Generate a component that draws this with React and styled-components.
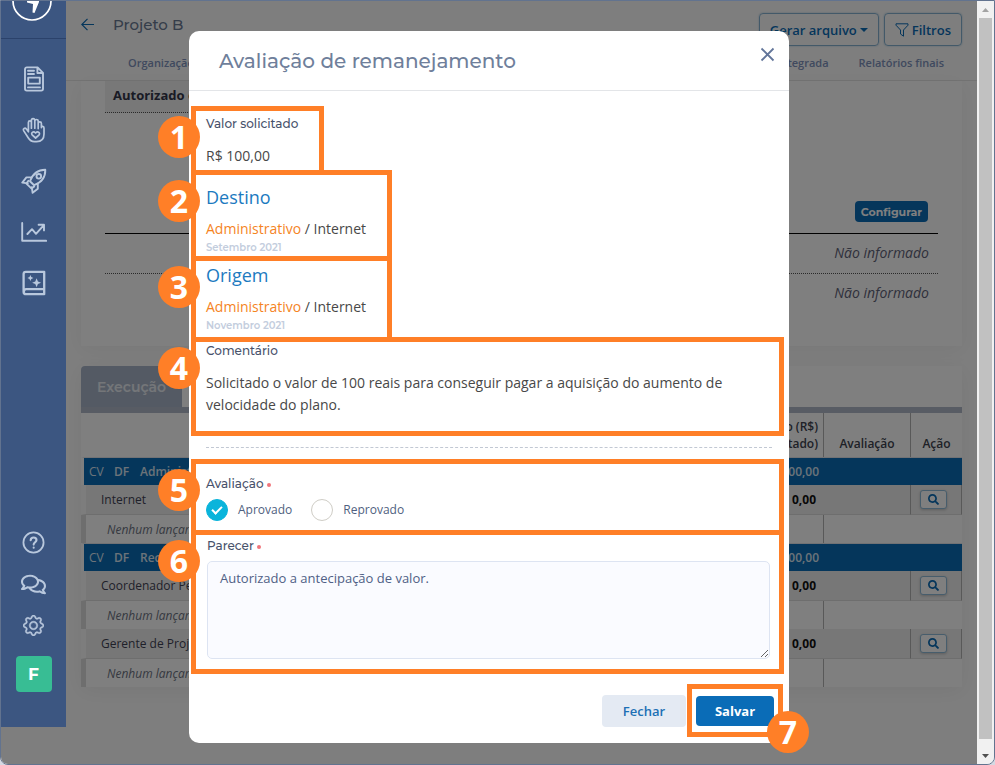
import React from "react"
import styled, { createGlobalStyle, css } from "styled-components"
import { FaRegComments, FaSearch } from "react-icons/fa"
import { BsGear } from "react-icons/bs"

const ORANGE = "#ff7f27"
const BLUE = "#0a6cb7"
const BODY_FONT = `"Open Sans", "Noto Sans", sans-serif`
const HEAD_FONT = `Montserrat, Inter, "Open Sans", sans-serif`

const GlobalStyle = createGlobalStyle`
  *, *::before, *::after {
    box-sizing: border-box;
  }

  body {
    margin: 0;
    background: #d5d9e2;
    font-family: ${BODY_FONT};
    font-size: 13px;
    color: #3f4254;
  }

  button, input, textarea {
    font-family: inherit;
  }

  h1, h2, h3, p {
    margin: 0;
  }
`

const Window = styled.div`
  display: flex;
  height: 100vh;
  border: 1px solid #62738f;
  border-radius: 0 0 8px 8px;
  overflow: hidden;
`

const Viewport = styled.div`
  position: relative;
  flex: 1;
  min-width: 0;
  display: flex;
  align-items: flex-start;
  background: #fdfdfd;
  overflow: hidden;
`

/* sidebar */

const Sidebar = styled.nav`
  position: relative;
  z-index: 2;
  flex: none;
  width: 65px;
  display: flex;
  flex-direction: column;
  align-items: center;
  padding-bottom: 35px;
  background: #3c5681;
  color: #b9c8dd;
`

const SidebarLogo = styled.a`
  width: 100%;
  height: 38px;
  display: flex;
  justify-content: center;
  padding-right: 3px;
  border-bottom: 1px solid #2b426b;
`

const SidebarGroup = styled.div`
  display: flex;
  flex-direction: column;
  align-items: center;
  gap: ${({ $gap }) => $gap};
  padding-top: ${({ $top }) => $top};
`

const SidebarLink = styled.a`
  display: flex;
  color: inherit;
`

const Avatar = styled.button`
  width: 36px;
  height: 36px;
  margin-top: 20px;
  border: 0;
  border-radius: 4px;
  background: #38bd94;
  color: white;
  font-family: ${HEAD_FONT};
  font-size: 17px;
  font-weight: 700;
  padding: 0;
`

/* page behind the dialog */

const Page = styled.main`
  flex: 1;
  min-width: 0;
`

const PageHeader = styled.header`
  height: 80px;
  padding: 12px 15px 0;
  border-bottom: 1px solid #e6e6e6;
`

const TitleBar = styled.div`
  display: flex;
  align-items: center;
  height: 33px;
`

const BackLink = styled.a`
  display: flex;
  width: 32px;
  margin-bottom: 10px;
  color: ${BLUE};
`

const PageTitle = styled.h1`
  flex: 1;
  margin-bottom: 10px;
  font-family: ${HEAD_FONT};
  font-size: 15px;
  font-weight: 500;
  color: #6b7a94;
`

const HeaderButton = styled.button`
  display: flex;
  align-items: center;
  justify-content: center;
  gap: 3px;
  height: 33px;
  padding: 0 10px;
  margin-left: 5px;
  border: 1px solid #86b3d3;
  border-radius: 4px;
  background: transparent;
  box-shadow: 0 0 2px #a9c8dc;
  color: ${BLUE};
  font-size: 13px;
  font-weight: 600;
`

const Caret = styled.span`
  border: 4px solid transparent;
  border-top-color: currentColor;
  border-bottom: 0;
`

const PageTabs = styled.div`
  display: flex;
  gap: 30px;
  padding: 8px 18px 0 47px;
  line-height: 18px;

  > a {
    color: #8093bd;
    font-size: 11px;
    font-weight: 600;
    text-decoration: none;
    white-space: nowrap;
  }

  > a:first-child {
    margin-right: auto;
  }
`

const Summary = styled.section`
  margin: 0 15px;
  height: 265px;
  padding: 0 24px;
  background: white;
  box-shadow: 0 4px 20px rgba(0, 0, 0, 0.05);
`

const SummaryTitle = styled.div`
  width: 50%;
  height: 32px;
  padding-left: 8px;
  background: #f0f0f0;
  border-bottom: 1px dotted #555;
  font-weight: 700;
  line-height: 28px;
  color: #33364a;
`

const ConfigRow = styled.div`
  display: flex;
  justify-content: flex-end;
  padding: 88px 10px 11px 0;
  border-bottom: 1px solid black;
`

const ConfigButton = styled.button`
  height: 21px;
  padding: 0 6px;
  border: 0;
  border-radius: 4px;
  background: ${BLUE};
  color: white;
  font-family: ${HEAD_FONT};
  font-size: 11px;
  font-weight: 700;
`

const EmptyValue = styled.p`
  height: 39px;
  padding-right: 9px;
  font-size: 14px;
  font-style: italic;
  line-height: 38px;
  text-align: right;
  color: #5f6278;

  & + & {
    border-top: 1px dotted #555;
  }
`

const Execution = styled.section`
  margin: 20px 15px 0;
  background: white;
  box-shadow: 0 4px 20px rgba(0, 0, 0, 0.06);
`

const ExecutionTabs = styled.div`
  display: flex;
  border-bottom: 6px solid #b1b9c9;
`

const ExecutionTab = styled.button`
  height: 41px;
  padding: 0 16px;
  border: 0;
  border-radius: 4px 0 0 0;
  background: #a9b5c8;
  color: #e9edf3;
  font-family: ${HEAD_FONT};
  font-size: 14px;
  font-weight: 600;
`

const Table = styled.table`
  width: 100%;
  table-layout: fixed;
  border-spacing: 0;
  font-size: 12px;

  td,
  th {
    padding: 0 5px;
    text-align: left;
    white-space: nowrap;
    overflow: hidden;
  }

  th {
    height: 44px;
    padding-top: 4px;
    font-weight: 600;
    line-height: 17px;
    vertical-align: bottom;
    padding-bottom: 5px;
    color: #40434f;
  }

  th + th {
    border-right: 1px solid #b3b3b3;
    text-align: right;
  }

  th + th + th {
    text-align: center;
  }

  th:last-child {
    border-right: 0;
  }
`

const GroupRow = styled.tr`
  height: 28px;

  > td {
    background: ${BLUE};
    color: #d9e7f3;
    font-weight: 600;
    border-top: 1px solid #e2e4ea;
  }

  > td:first-child {
    border-left: 3px solid white;
    font-weight: 400;
  }

  > td:nth-child(4) {
    text-align: right;
  }
`

const ItemRow = styled.tr`
  height: 30px;

  > td {
    background: #efefef;
    border-bottom: 1px solid #dcdcdc;
  }

  > td:first-child {
    padding-left: 15px;
    border-left: 5px solid #fafafa;
  }

  > td:nth-child(2) {
    padding-right: 8px;
    text-align: right;
    font-weight: 700;
    color: #111;
  }

  > td:nth-child(n + 3) {
    border-right: 1px solid #b3b3b3;
  }

  > td:last-child {
    padding: 0 0 0 9px;
  }
`

const EmptyRow = styled.tr`
  height: 28px;

  > td:first-child {
    padding-left: 21px;
    border-left: 5px solid #dcdcdc;
    border-right: 1px solid #b3b3b3;
    font-style: italic;
    color: #6d7382;
  }
`

const SearchButton = styled.button`
  display: inline-flex;
  align-items: center;
  justify-content: center;
  width: 27px;
  height: 19px;
  padding: 0;
  border: 1px solid #8fbbd8;
  border-radius: 3px;
  background: white;
  box-shadow: 0 1px 3px #bbb;
  color: ${BLUE};
  vertical-align: middle;
`

/* dialog */

const Backdrop = styled.div`
  position: absolute;
  inset: 0;
  z-index: 1;
  display: flex;
  justify-content: center;
  align-items: flex-start;
  padding-top: 30px;
  background: rgba(0, 0, 0, 0.5);
`

const Dialog = styled.div`
  width: 100%;
  max-width: 600px;
  padding-bottom: 6px;
  border-radius: 10px;
  background: white;
`

const DialogHeader = styled.header`
  display: flex;
  align-items: center;
  justify-content: space-between;
  height: 60px;
  padding: 0 14px 0 30px;
  border-bottom: 1px solid #e3e5e8;
`

const DialogTitle = styled.h2`
  font-family: ${HEAD_FONT};
  font-size: 20px;
  font-weight: 500;
  color: #6f7f9b;
`

const CloseButton = styled.button`
  display: flex;
  padding: 0;
  margin-bottom: 12px;
  border: 0;
  background: none;
  color: #62759a;
`

const DialogBody = styled.div`
  display: flex;
  flex-direction: column;
  align-items: flex-start;
  padding: 15px 5px 0 2px;
`

const Step = styled.section`
  position: relative;
  width: ${({ $width }) => $width || "100%"};
  padding: ${({ $padding }) => $padding};
  border: 5px solid ${ORANGE};

  & + & {
    margin-top: -5px;
  }
`

const StepBadge = styled.span`
  position: absolute;
  z-index: 1;
  ${({ $corner }) =>
    $corner
      ? css`
          right: -31px;
          bottom: -21px;
        `
      : css`
          left: -38px;
          top: 5px;
        `}
  width: 42px;
  height: 42px;
  border-radius: 50%;
  background: ${ORANGE};
  color: white;
  font-size: 32px;
  font-weight: 700;
  line-height: 42px;
  text-align: center;
`

const Label = styled.label`
  display: block;
  font-family: ${HEAD_FONT};
  font-size: 12px;
  font-weight: 500;
  line-height: 18px;
  color: #48526b;
`

const Required = styled.span`
  display: inline-block;
  width: 4px;
  height: 4px;
  margin-left: 3px;
  border-radius: 50%;
  background: #f0757b;
  vertical-align: middle;
`

const Value = styled.p`
  margin-top: ${({ $first }) => ($first ? "9px" : "12px")};
  font-size: 14px;
  line-height: 22px;
  color: #484848;

  > a {
    color: #f5841f;
    text-decoration: none;
  }
`

const StepTitle = styled.h3`
  font-size: 18px;
  font-weight: 400;
  line-height: 24px;
  color: #1c7abf;
`

const Month = styled.p`
  font-family: ${HEAD_FONT};
  font-size: 10px;
  font-weight: 600;
  line-height: 16px;
  color: #c3cddd;
`

const Divider = styled.hr`
  align-self: stretch;
  margin: 11px 12px 11px 15px;
  border: 0;
  border-top: 1px dashed #c2c8d3;
`

const RadioGroup = styled.div`
  display: flex;
  align-items: center;
  margin-top: 6px;
`

const RadioLabel = styled.label`
  display: flex;
  align-items: center;
  gap: 10px;
  margin-right: 19px;
  font-size: 12px;
  line-height: 22px;
  color: #4f5f80;
`

const Radio = styled.input`
  appearance: none;
  width: 22px;
  height: 22px;
  margin: 0;
  border: 1px solid #cfcdc6;
  border-radius: 50%;
  background: white;
  display: grid;
  place-items: center;

  &:checked {
    border-color: #0ab4db;
    background: #0ab4db;
  }

  &:checked::before {
    content: "";
    width: 10px;
    height: 6px;
    margin-bottom: 3px;
    border: solid white;
    border-width: 0 0 2px 2px;
    transform: rotate(-45deg);
  }
`

const Textarea = styled.textarea`
  display: block;
  width: 100%;
  height: 98px;
  margin-top: 6px;
  padding: 6px 12px;
  border: 1px solid #dde4f2;
  border-radius: 5px;
  background: #fafbff;
  color: #4f6085;
  font-size: 13px;
  line-height: 20px;
  outline: 0;
`

const DialogFooter = styled.footer`
  align-self: flex-end;
  display: flex;
  align-items: center;
  gap: 1px;
  padding: 10px 1px 0 0;
`

const FooterButton = styled.button`
  display: block;
  min-width: ${({ $primary }) => ($primary ? "78px" : "84px")};
  height: ${({ $primary }) => ($primary ? "30px" : "32px")};
  padding: 0;
  border: 0;
  border-radius: 4px;
  background: ${({ $primary }) => ($primary ? BLUE : "#e4eaf3")};
  color: ${({ $primary }) => ($primary ? "white" : "#1c70b5")};
  font-size: 13px;
  font-weight: ${({ $primary }) => ($primary ? 700 : 600)};
`

/* scrollbar */

const ScrollBar = styled.div`
  flex: none;
  width: 17px;
  display: flex;
  flex-direction: column;
  align-items: center;
  background: #f1f1f1;
`

const ScrollArrow = styled.span`
  display: flex;
  align-items: center;
  height: 17px;
  color: ${({ $muted }) => ($muted ? "#a3a3a3" : "#505050")};
`

const ScrollThumb = styled.div`
  flex: 1;
  width: 13px;
  margin-bottom: 8px;
  background: #c1c1c1;
`

const LineIcon = ({ size = 26, width = 2, children }) => (
  <svg
    width={size}
    height={size}
    viewBox="0 0 26 26"
    fill="none"
    stroke="currentColor"
    strokeWidth={width}
    strokeLinecap="round"
    strokeLinejoin="round"
    aria-hidden="true"
  >
    {children}
  </svg>
)

const DocumentIcon = () => (
  <LineIcon width={1.9}>
    <path d="M4 3.2C4 2 4.8 1.4 5.8 1.4h10.8L22 6.8v16c0 1-.7 1.8-1.8 1.8H5.8c-1 0-1.8-.8-1.8-1.8zM16.4 1.6V7h5.4M7 4.8h6M7 8h6M7 21.4h12" />
    <path d="M7.2 11.6h11.6v6H7.2z" />
  </LineIcon>
)

const HandIcon = () => (
  <LineIcon width={1.7}>
    <path d="M7.4 14.8V5.4c0-2 3-2 3 0v5.8V3.2c0-2.2 3.4-2.2 3.4 0v8V4c0-2 3.4-2 3.4 0v7.6V6.4c0-2 3.2-2 3.2 0v4.2c0-1.6 2.6-1.6 2.6.4v6c0 4.8-2.8 7.6-7.4 7.6h-2.2c-3 0-4.8-1.4-6.2-3.8l-4.6-7.2c-1-2 1.4-3.2 2.8-1.6z" />
    <path d="M14.6 21l-3.5-3.2c-1.4-1.8 1-4.2 3.5-1.8 2.5-2.4 4.9 0 3.5 1.8z" />
  </LineIcon>
)

const RocketIcon = () => (
  <LineIcon width={1.9}>
    <path d="M9 13.2C11.6 6 17 1.7 24.3 1.7c.2 7.3-4 12.7-11.2 15.5z" />
    <path d="M10.6 9.4H5.4L1.3 14.6l5.5.8M16.8 15.6v5.2l-5.2 4-.8-5.6M7.4 12.8l-2 2.8 5.2 5 2.6-2.2" />
    <circle cx="17.8" cy="8.3" r="2.3" />
  </LineIcon>
)

const ChartIcon = () => (
  <LineIcon width={1.9}>
    <path d="M1.2 4v17.8h24M6.4 15l4.6-4.8 4 4.6 7.4-8.2M17.6 5.8h5.4V11.4" />
  </LineIcon>
)

const BookIcon = () => (
  <LineIcon width={2.3}>
    <path d="M4.8 1.8h18.4v22.4H5.2c-1.6 0-2.6-.8-2.6-2.2V4c0-1.4.8-2.2 2.2-2.2zM2.8 22c0-2 .8-2.8 2.4-2.8h18" />
    <path
      d="M9.4 5l.9 2.1 2.1.9-2.1.9-.9 2.1-.9-2.1L6.4 8l2.1-.9zM15.6 8.2l1.3 3.2 3.2 1.3-3.2 1.3-1.3 3.2-1.3-3.2-3.2-1.3 3.2-1.3z"
      fill="currentColor"
      stroke="none"
    />
  </LineIcon>
)

const HelpIcon = () => (
  <LineIcon size={23}>
    <circle cx="13" cy="13" r="11.4" />
    <path d="M9.8 10.4c.2-4.2 6.6-4 6.600-.2 0 2.400-3.200 2.600-3.200 5.200M13.200 18.800v.2" strokeWidth="2.400" />
  </LineIcon>
)

const LogoIcon = () => (
  <svg width="42" height="21" viewBox="0 21 42 21" aria-hidden="true">
    <circle cx="21" cy="21" r="19" fill="none" stroke="white" strokeWidth="1.7" />
    <path d="M16 22.500l6 1.500-.5 8.500 2 .5 4.500-11V19H16z" fill="white" />
  </svg>
)

const MENU = [
  ["Projetos", DocumentIcon],
  ["Doações", HandIcon],
  ["Lançamentos", RocketIcon],
  ["Indicadores", ChartIcon],
  ["Biblioteca", BookIcon],
]

const GROUPS = [
  { name: "Administrativo", items: ["Internet"] },
  { name: "Recursos humanos", items: ["Coordenador Pedagógico", "Gerente de Projetos"] },
]

const Allocation = ({ title, month }) => (
  <>
    <StepTitle>{title}</StepTitle>
    <Value $first>
      <a href="#administrativo">Administrativo</a> / Internet
    </Value>
    <Month>{month}</Month>
  </>
)

const BudgetTable = () => (
  <Table>
    <colgroup>
      <col style={{ width: 28 }} />
      <col style={{ width: 26 }} />
      <col />
      <col style={{ width: 120 }} />
      <col style={{ width: 87 }} />
      <col style={{ width: 51 }} />
    </colgroup>
    <thead>
      <tr>
        <th colSpan={3} aria-label="Item" />
        <th>
          Saldo (R$)
          <br />
          (executado)
        </th>
        <th>Avaliação</th>
        <th>Ação</th>
      </tr>
    </thead>
    <tbody>
      {GROUPS.map(({ name, items }) => (
        <React.Fragment key={name}>
          <GroupRow>
            <td>CV</td>
            <td>DF</td>
            <td>{name}</td>
            <td>100,00</td>
            <td />
            <td />
          </GroupRow>
          {items.map((item) => (
            <React.Fragment key={item}>
              <ItemRow>
                <td colSpan={3}>{item}</td>
                <td>0,00</td>
                <td />
                <td>
                  <SearchButton aria-label={`Ver ${item}`}>
                    <FaSearch size={11} />
                  </SearchButton>
                </td>
              </ItemRow>
              <EmptyRow>
                <td colSpan={4}>Nenhum lançamento</td>
                <td colSpan={2} />
              </EmptyRow>
            </React.Fragment>
          ))}
        </React.Fragment>
      ))}
    </tbody>
  </Table>
)

const EvaluationDialog = () => (
  <Dialog role="dialog" aria-labelledby="dialog-title">
    <DialogHeader>
      <DialogTitle id="dialog-title">Avaliação de remanejamento</DialogTitle>
      <CloseButton aria-label="Fechar janela">
        <svg width="15" height="15" viewBox="0 0 15 15" stroke="currentColor" strokeWidth="1.8">
          <path d="M1.5 1.500l12 12M13.500 1.500l-12 12" />
        </svg>
      </CloseButton>
    </DialogHeader>
    <DialogBody>
      <Step $width="133px" $padding="4px 10px 3px">
        <StepBadge>1</StepBadge>
        <Label as="p">Valor solicitado</Label>
        <Value>R$ 100,00</Value>
      </Step>
      <Step $width="201px" $padding="10px 10px 0">
        <StepBadge>2</StepBadge>
        <Allocation title="Destino" month="Setembro 2021" />
      </Step>
      <Step $width="201px" $padding="2px 10px 3px">
        <StepBadge>3</StepBadge>
        <Allocation title="Origem" month="Novembro 2021" />
      </Step>
      <Step $padding="0 10px 15px">
        <StepBadge>4</StepBadge>
        <Label as="p">Comentário</Label>
        <Value>
          Solicitado o valor de 100 reais para conseguir pagar a aquisição do aumento de velocidade
          do plano.
        </Value>
      </Step>
      <Divider />
      <Step $padding="11px 10px 9px">
        <StepBadge>5</StepBadge>
        <Label as="p" id="avaliacao">
          Avaliação
          <Required />
        </Label>
        <RadioGroup role="radiogroup" aria-labelledby="avaliacao">
          <RadioLabel>
            <Radio type="radio" name="avaliacao" defaultChecked />
            Aprovado
          </RadioLabel>
          <RadioLabel>
            <Radio type="radio" name="avaliacao" />
            Reprovado
          </RadioLabel>
        </RadioGroup>
      </Step>
      <Step $padding="2px 9px 10px 11px">
        <StepBadge>6</StepBadge>
        <Label htmlFor="parecer">
          Parecer
          <Required />
        </Label>
        <Textarea id="parecer" defaultValue="Autorizado a antecipação de valor." />
      </Step>
      <DialogFooter>
        <FooterButton>Fechar</FooterButton>
        <Step $width="auto" $padding="7px 4px 6px">
          <FooterButton $primary>Salvar</FooterButton>
          <StepBadge $corner>7</StepBadge>
        </Step>
      </DialogFooter>
    </DialogBody>
  </Dialog>
)

const App = () => (
  <Window>
    <GlobalStyle />
    <Viewport>
      <Sidebar>
        <SidebarLogo href="#inicio" aria-label="Início">
          <LogoIcon />
        </SidebarLogo>
        <SidebarGroup $top="27px" $gap="25px">
          {MENU.map(([label, Icon]) => (
            <SidebarLink key={label} href="#menu" aria-label={label}>
              <Icon />
            </SidebarLink>
          ))}
        </SidebarGroup>
        <SidebarGroup $top="235px" $gap="18px">
          <SidebarLink href="#ajuda" aria-label="Ajuda">
            <HelpIcon />
          </SidebarLink>
          <SidebarLink href="#mensagens" aria-label="Mensagens">
            <FaRegComments size={25} />
          </SidebarLink>
          <SidebarLink href="#ajustes" aria-label="Ajustes">
            <BsGear size={21} stroke="currentColor" strokeWidth="0.4" />
          </SidebarLink>
        </SidebarGroup>
        <Avatar>F</Avatar>
      </Sidebar>

      <Page>
        <PageHeader>
          <TitleBar>
            <BackLink href="#voltar" aria-label="Voltar">
              <svg width="13" height="13" viewBox="0 0 13 13" fill="none" stroke="currentColor" strokeWidth="1.2">
                <path d="M13 6.5H.8M6.500.8L.8 6.500 6.500 12.200" />
              </svg>
            </BackLink>
            <PageTitle>Projeto B</PageTitle>
            <HeaderButton>
              Gerar arquivo <Caret />
            </HeaderButton>
            <HeaderButton>
              <svg width="14" height="14" viewBox="0 0 13 14" fill="none" stroke="currentColor">
                <path d="M.5.800h12v1.400L8 7v6.200L5 11V7L.5 2.200z" />
              </svg>
              Filtros
            </HeaderButton>
          </TitleBar>
          <PageTabs>
            <a href="#organizacao">Organização</a>
            <a href="#integrada">Integrada</a>
            <a href="#relatorios">Relatórios finais</a>
          </PageTabs>
        </PageHeader>
        <Summary>
          <SummaryTitle>Autorizado em</SummaryTitle>
          <ConfigRow>
            <ConfigButton>Configurar</ConfigButton>
          </ConfigRow>
          <EmptyValue>Não informado</EmptyValue>
          <EmptyValue>Não informado</EmptyValue>
        </Summary>
        <Execution>
          <ExecutionTabs>
            <ExecutionTab>Execução</ExecutionTab>
          </ExecutionTabs>
          <BudgetTable />
        </Execution>
      </Page>

      <Backdrop>
        <EvaluationDialog />
      </Backdrop>
    </Viewport>
    <ScrollBar aria-hidden="true">
      <ScrollArrow $muted>
        <svg width="7" height="4" viewBox="0 0 7 4" fill="currentColor">
          <path d="M0 4l3.500-4L7 4z" />
        </svg>
      </ScrollArrow>
      <ScrollThumb />
      <ScrollArrow>
        <svg width="7" height="4" viewBox="0 0 7 4" fill="currentColor">
          <path d="M0 0l3.500 4L7 0z" />
        </svg>
      </ScrollArrow>
    </ScrollBar>
  </Window>
)

export default App
